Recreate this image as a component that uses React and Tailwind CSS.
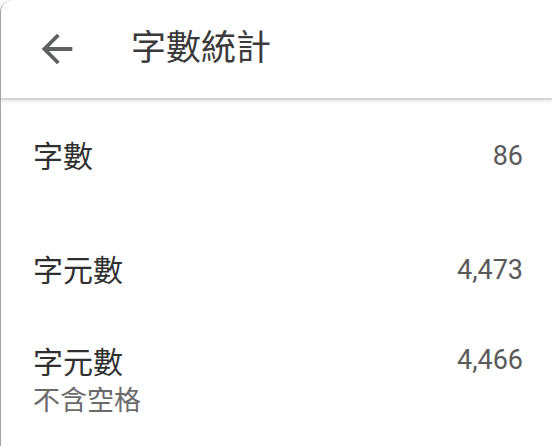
import React from 'react';

const rows = [
  { label: '字數', value: '86' },
  { label: '字元數', value: '4,473' },
];

export default function App() {
  return (
    <div
      className="w-[552px] h-[446px] overflow-hidden bg-white border-l border-[#a3a3a3] rounded-tl-[12px]"
      style={{ fontFamily: "Roboto, 'Noto Sans CJK TC', sans-serif" }}
    >
      {/* Toolbar */}
      <div className="h-[100px] flex items-center border-b-2 border-[#d4d4d4] shadow-[0_2px_3px_rgba(0,0,0,0.08)]">
        <svg viewBox="0 0 24 24" className="w-[46px] h-[46px] ml-[33px] fill-[#5f6062]">
          <path d="M20 11H7.83l5.59-5.59L12 4l-8 8 8 8 1.41-1.41L7.83 13H20v-2z" />
        </svg>
        <h1 className="ml-[51px] text-[35px] leading-[42px] text-[#3a3a3a]">字數統計</h1>
      </div>

      {/* Stats list */}
      {rows.map((r) => (
        <div key={r.label} className="h-[114px] flex items-center justify-between pl-[32px] pr-[29px]">
          <span className="text-[30px] leading-[36px] text-[#2f2f2f]">{r.label}</span>
          <span className="text-[27px] leading-[36px] text-[#5a5a5a] -mt-[2px]">{r.value}</span>
        </div>
      ))}

      <div className="flex justify-between pl-[32px] pr-[29px] pt-[17px]">
        <div className="flex flex-col">
          <span className="text-[30px] leading-[36px] text-[#2f2f2f]">字元數</span>
          <span className="text-[27px] leading-[34px] mt-[3px] text-[#6b6b6b]">不含空格</span>
        </div>
        <span className="text-[27px] leading-[36px] text-[#5a5a5a] -mt-[3px]">4,466</span>
      </div>
    </div>
  );
}
